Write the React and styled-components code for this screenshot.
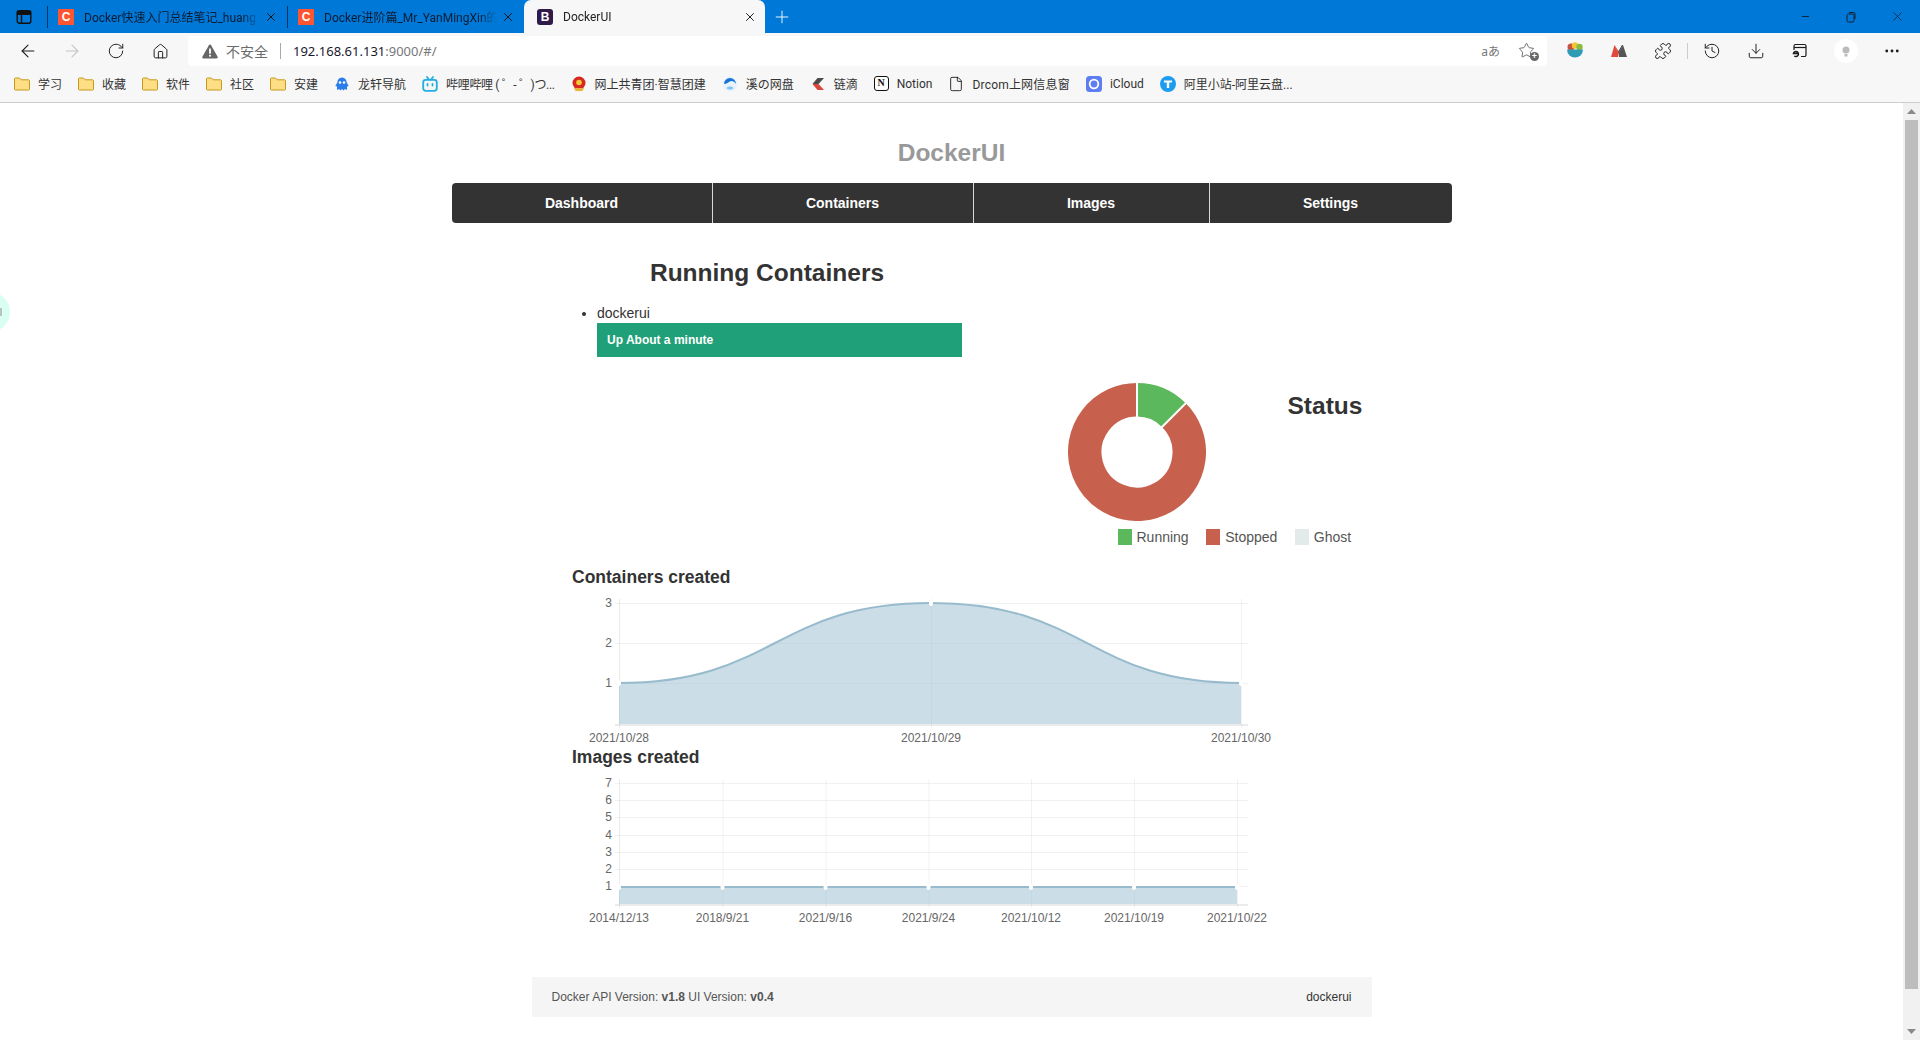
import React from "react";
import styled, { createGlobalStyle } from "styled-components";
import {
  ArrowLeft, ArrowRight, RotateCw, Home, X, Plus, Minus, Puzzle, History,
  Download, MoreHorizontal, Star, File,
} from "lucide-react";

const Global = createGlobalStyle`
  html, body { margin: 0; padding: 0; height: 100%; overflow: hidden; background: #fff; }
  body { font-family: "Liberation Sans", Arial, sans-serif; font-size: 14px; color: #333; }
  * { box-sizing: border-box; }
`;

const CHROME_FONT = `"Noto Sans", "Noto Sans CJK SC", sans-serif`;
const LABEL_FONT = `Roboto, "Noto Sans CJK SC", sans-serif`;

const Screen = styled.div`
  width: 1920px; height: 1040px; display: flex; flex-direction: column; overflow: hidden; position: relative;
`;

/* ---------- browser chrome ---------- */
const TabStrip = styled.div`
  height: 33px; background: #0078d7; display: flex; align-items: stretch; font-family: ${LABEL_FONT};
`;
const SideButton = styled.div`
  width: 47px; display: flex; align-items: center; justify-content: center; padding-left: 1px;
`;
const TabSep = styled.div`
  width: 1px; height: 22px; align-self: center; background: rgba(0,0,0,.55);
`;
const Tab = styled.div`
  width: ${p => p.$w}px; display: flex; align-items: center; padding: 0 ${p => p.$active ? 8 : 9}px 0 ${p => p.$active ? 13 : 10}px;
  background: ${p => p.$active ? "#f7f7f7" : "transparent"};
  border-radius: ${p => p.$active ? "7px 7px 0 0" : 0};
  color: ${p => p.$active ? "#222" : "#0c1c33"};
`;
const Favicon = styled.div`
  width: 16px; height: 16px; flex: none; display: flex; align-items: center; justify-content: center;
  background: ${p => p.$bg}; color: #fff; font: 700 12px "Liberation Sans", sans-serif;
  border-radius: ${p => p.$r || 0}px;
`;
const TabTitle = styled.div`
  flex: 1; min-width: 0; margin: 0 4px 0 10px; font-size: 12px; white-space: nowrap; overflow: hidden;
  -webkit-mask-image: linear-gradient(to right, #000 90%, transparent 100%);
  mask-image: linear-gradient(to right, #000 90%, transparent 100%);
`;
const PlusBox = styled.div`
  width: 20px; margin-left: 7px; display: flex; align-items: center; justify-content: center; color: #fff;
`;
const WindowControls = styled.div`
  margin-left: auto; display: flex; color: #14202e;
`;
const WinBtn = styled.div`
  width: 46px; display: flex; align-items: center; justify-content: center;
`;

const Toolbar = styled.div`
  height: 36px; background: #f7f7f7; display: flex; align-items: flex-start; padding: 3px 0 0 6px; font-family: ${CHROME_FONT};
`;
const ToolBtn = styled.div`
  width: 44px; height: 30px; flex: none; display: flex; align-items: center; justify-content: center;
  color: ${p => p.$muted ? "#c4c4c4" : "#1f1f1f"}; margin: ${p => p.$m || 0};
`;
const AddressBox = styled.div`
  width: 1359px; height: 30px; margin: 0 6px; background: #fff; border-radius: 4px; display: flex; align-items: center; padding: 0 11px 0 14px;
`;
const NotSecure = styled.span`
  margin-left: 8px; font-size: 14px; color: #6b6b6b;
`;
const AddrSep = styled.div`
  width: 1px; height: 16px; background: #a8a8a8; margin: 0 12px;
`;
const Url = styled.div`
  font-size: 13px; color: #777;
  & b { font-weight: 400; color: #1a1a2e; }
`;
const AddrRight = styled.div`
  margin-left: auto; display: flex; align-items: center; gap: 18px;
`;
const Translate = styled.span`
  font-size: 12px; color: #777;
`;
const StarWrap = styled.div`
  position: relative; width: 18px; height: 18px; color: #555;
`;
const StarPlus = styled.div`
  position: absolute; right: -3px; bottom: -1px; width: 9px; height: 9px; border-radius: 50%; background: #666;
  color: #fff; font: 700 9px/9px "Liberation Sans", sans-serif; text-align: center;
`;
const ToolSep = styled.div`
  width: 1px; height: 16px; margin: 7px 2px 0; background: #ccc; flex: none;
`;
const Avatar = styled.div`
  width: 24px; height: 24px; border-radius: 50%; background: #fff; display: flex; align-items: center; justify-content: center;
`;

const Bookmarks = styled.div`
  height: 34px; background: #f7f7f7; border-bottom: 1px solid #ccc; display: flex; align-items: center; gap: 16px;
  padding: 0 0 4px 14px; font-family: ${LABEL_FONT}; font-size: 12px; color: #333;
`;
const Bookmark = styled.div`
  display: flex; align-items: center; gap: 8px; white-space: nowrap;
  & > svg, & > div:first-child { flex: none; }
`;
const BookmarkLabel = styled.span`
  letter-spacing: ${p => p.$spacing || 0}px;
`;
const NotionMark = styled.div`
  width: 15px; height: 15px; border: 1.5px solid #111; border-radius: 3px; background: #fff;
  font: 700 10px/12px "Liberation Serif", serif; color: #111; text-align: center;
`;

/* ---------- page ---------- */
const PageArea = styled.div`
  flex: 1; min-height: 0; display: flex;
`;
const Page = styled.main`
  width: 1903px; display: flex; flex-direction: column; align-items: center; background: #fff;
`;
const Masthead = styled.h3`
  margin: 29px 0 9px; width: 1000px; text-align: center; font-size: 24.5px; line-height: 42px; font-weight: 700; color: #999;
`;
const NavBar = styled.nav`
  width: 1000px; height: 40px; background: #333; border-radius: 4px; display: grid;
  grid-template-columns: 261px 261px 236px 242px;
`;
const NavItem = styled.a`
  display: flex; align-items: center; justify-content: center; color: #fff; font-weight: 700; font-size: 14px;
  border-right: ${p => p.$last ? "none" : "1px solid #d8d8d8"};
`;
const Content = styled.div`
  width: 840px; padding: 0 40px; display: flex; flex-direction: column;
`;
const RunningBlock = styled.section`
  width: 390px; margin-left: 0.5px;
`;
const BigHeading = styled.h3`
  margin: ${p => p.$m}; font-size: 24.5px; line-height: 42px; font-weight: 700; color: #333; text-align: ${p => p.$center ? "center" : "left"};
`;
const ContainerList = styled.ul`
  margin: 0; padding: 0 0 0 25px; line-height: 20px; color: #333;
`;
const RunBar = styled.div`
  height: 34px; background: #1fa078; color: #fff; font-weight: 700; font-size: 12px; display: flex; align-items: center; padding-left: 10px;
`;
const StatusRow = styled.section`
  margin: 26px 0 0 496px; display: flex; align-items: flex-start;
`;
const Legend = styled.div`
  margin: 8px 0 0 546px; display: flex; gap: 17.5px; line-height: 16px; color: #555;
`;
const LegendItem = styled.div`
  display: flex; align-items: center; gap: 5px;
`;
const Swatch = styled.span`
  width: 14px; height: 16px; background: ${p => p.$c};
`;
const ChartHeading = styled.h4`
  margin: ${p => p.$m}; padding-left: 0.5px; font-size: 17.5px; line-height: 20px; font-weight: 700; color: #333;
`;
const ChartSvg = styled.svg`
  display: block; margin: 8px 0 0 1px; overflow: visible;
  & text { font: 12px "Liberation Sans", sans-serif; fill: #666; }
`;
const Footer = styled.footer`
  width: 840px; height: 40px; margin-top: 52px; background: #f5f5f5; display: flex; align-items: center; justify-content: space-between;
  padding: 0 20px; font-size: 12px; color: #555;
`;
const FooterRight = styled.span`
  color: #333;
`;
const Scrollbar = styled.aside`
  width: 17px; background: #f1f1f1; display: flex; flex-direction: column; align-items: center;
`;
const ScrollArrow = styled.div`
  height: 17px; flex: none; display: flex; align-items: center; justify-content: center; margin-top: ${p => p.$bottom ? "auto" : 0};
`;
const Thumb = styled.div`
  width: 13px; height: 869px; background: #bdbdbd;
`;
const EdgeBubble = styled.div`
  position: absolute; left: -30px; top: 292px; width: 40px; height: 40px; border-radius: 50%; background: #d8fff2;
  &::after { content: ""; position: absolute; left: 30px; top: 16px; width: 2px; height: 8px; background: #b9c4c0; }
`;

/* ---------- drawings ---------- */
const SidebarIcon = () => (
  <svg width="16" height="16" viewBox="0 0 16 16" fill="none" stroke="#111" strokeWidth="1.4">
    <rect x="1.2" y="1.7" width="13.6" height="12.6" rx="2.4" />
    <path d="M1.5 5h13M5.5 5v9" />
    <path d="M1.5 2.5h13v2.5h-13z" fill="#111" />
  </svg>
);
const RestoreIcon = () => (
  <svg width="10" height="12" viewBox="0 0 10 12" fill="none" stroke="#14202e">
    <rect x="1" y="3" width="7" height="8" rx="1.5" />
    <path d="M3 1.5h4.5a1.5 1.5 0 0 1 1.5 1.5v5" />
  </svg>
);
const WarnIcon = () => (
  <svg width="16" height="15" viewBox="0 0 16 15">
    <path d="M8 .6c.5 0 .9.3 1.100.6l6.500 11.500c.4.800-.1 1.700-1 1.700H1.400c-.9 0-1.400-.9-1-1.700L6.900 1.200C7.100.9 7.500.6 8 .6z" fill="#666" />
    <rect x="7.100" y="4.500" width="1.800" height="5.200" fill="#fff" />
    <rect x="7.100" y="10.800" width="1.800" height="1.800" fill="#fff" />
  </svg>
);
const FolderIcon = () => (
  <svg width="16" height="14" viewBox="0 0 16 14">
    <path d="M1.5 1h4l1.6 1.8h7.4a1 1 0 0 1 1 1V12a1 1 0 0 1-1 1h-13a1 1 0 0 1-1-1V2a1 1 0 0 1 1-1z" fill="#ffdf85" stroke="#c5981f" />
  </svg>
);
const GhostLogo = () => (
  <svg width="16" height="16" viewBox="0 0 16 16">
    <path d="M8 1.500c3 0 4.500 2.200 4.700 5l2 3.500-1.700.5v3.500l-2-1-1.500 1.500-1.500-1.500-1.500 1.500-1.500-1.500-2 1V10.500l-1.700-.5 2-3.500c.2-2.800 1.700-5 4.700-5z" fill="#2b7de9" />
    <circle cx="6" cy="6.500" r="1.300" fill="#fff" /><circle cx="10" cy="6.500" r="1.300" fill="#fff" />
  </svg>
);
const BiliLogo = () => (
  <svg width="16" height="16" viewBox="0 0 16 16" fill="none" stroke="#23ade5" strokeWidth="1.800" strokeLinecap="round">
    <rect x="1.200" y="3.800" width="13.600" height="11" rx="2.500" />
    <path d="M5 1l2 2.500M11 1L9 3.500M5.500 8v1.500M10.500 8v1.500" />
  </svg>
);
const EmblemLogo = () => (
  <svg width="16" height="16" viewBox="0 0 16 16">
    <circle cx="8" cy="7" r="6.500" fill="#d8281e" />
    <circle cx="8" cy="6.500" r="2.800" fill="#f4c63a" />
    <path d="M3 12h10l-1.500 3h-7z" fill="#e9b23a" />
  </svg>
);
const SwirlLogo = () => (
  <svg width="16" height="16" viewBox="0 0 16 16">
    <circle cx="8" cy="8" r="7.500" fill="#e9f2fb" />
    <path d="M2 8a6 6 0 0 1 12 0c-2-3-4-3.500-6-2.500S4 8 2 8z" fill="#1573d8" />
    <path d="M4.500 12c1.500-2 5.500-2 7 0-1.500 2-5.500 2-7 0z" fill="#7fc4f2" />
  </svg>
);
const LiandiLogo = () => (
  <svg width="16" height="16" viewBox="0 0 16 16">
    <path d="M14 2H7.500L2.500 8h6z" fill="#4a4a4a" />
    <path d="M2.500 8h6l5.500 6H7.500z" fill="#d9453a" />
  </svg>
);
const CloudLogo = () => (
  <svg width="16" height="16" viewBox="0 0 16 16" fill="none">
    <rect width="16" height="16" rx="3.500" fill="#5f7df2" />
    <circle cx="8" cy="8" r="4.300" stroke="#fff" strokeWidth="1.800" />
  </svg>
);
const AliLogo = () => (
  <svg width="16" height="16" viewBox="0 0 16 16">
    <circle cx="8" cy="8" r="8" fill="#1d9bf0" />
    <path d="M4 4.500h8v2H9.200V12H6.800V6.500H4z" fill="#fff" />
  </svg>
);
const BowlLogo = () => (
  <svg width="18" height="18" viewBox="0 0 18 18">
    <circle cx="5" cy="5" r="3.500" fill="#c8503f" />
    <circle cx="9" cy="3.500" r="3.200" fill="#f3c634" />
    <circle cx="13.500" cy="5" r="3.200" fill="#8dbb3f" />
    <path d="M1 7.500h16a8 8 0 0 1-16 0z" fill="#2e9bb5" />
  </svg>
);
const MLogo = () => (
  <svg width="16" height="14" viewBox="0 0 16 14">
    <path d="M0 13L3.500 1 7 8v5z" fill="#e04a3c" />
    <path d="M8 13V8l4-7 4 12z" fill="#555" />
    <path d="M3.500 1L8 8v5l-1-5z" fill="#c9352a" />
    <path d="M12 1L8 8l-1 0 4-7z" fill="#333" />
  </svg>
);
const ExplorerIcon = () => (
  <svg width="16" height="16" viewBox="0 0 16 16" fill="none" stroke="#1a1a1a" strokeWidth="1.200">
    <path d="M2 7V3a1.500 1.500 0 0 1 1.500-1.500h9A1.500 1.500 0 0 1 14 3v9a1.500 1.500 0 0 1-1.500 1.500H9" />
    <path d="M2 4.500h12" />
    <path d="M6.500 10.500H1.500a2.500 2.500 0 1 1 .8 2.500 M1.500 10.500a2.500 2.500 0 0 1 4.800-.5" strokeWidth="1.500" />
  </svg>
);
const BulbIcon = () => (
  <svg width="10" height="11" viewBox="0 0 10 11" fill="#bbb">
    <circle cx="5" cy="4" r="3.500" /><rect x="3.500" y="8" width="3" height="2.500" />
  </svg>
);

const gridStroke = "rgba(0,0,0,.05)";
const axisStroke = "rgba(0,0,0,.08)";

const PointGap = ({ x, y }) => <ellipse cx={x} cy={y} rx="2" ry="3" fill="#fff" />;

const ContainersChart = () => {
  const ys = [[603, "3"], [643, "2"], [683, "1"]];
  const line = "M618 683C774 683 774 603 930 603C1086 603 1086 683 1240 683";
  return (
    <ChartSvg width="708" height="150" viewBox="572 595 708 150">
      {ys.map(([y]) => <line key={y} x1="614" x2="1247" y1={y + .5} y2={y + .5} stroke={gridStroke} />)}
      {[930, 1240].map(x => <line key={x} x1={x + .5} x2={x + .5} y1="599" y2="728" stroke={gridStroke} />)}
      <line x1="618.500" x2="618.500" y1="599" y2="728" stroke={axisStroke} />
      <line x1="614" x2="1247" y1="725" y2="725" stroke={axisStroke} strokeWidth="2" />
      <path d={line + "V724H618Z"} fill="rgba(151,187,205,.5)" />
      <path d={line} fill="none" stroke="#97bbcd" strokeWidth="2" />
      <PointGap x={618} y={683} /><PointGap x={930} y={603} /><PointGap x={1240} y={683} />
      {ys.map(([y, t]) => <text key={t} x="611" y={y + 4} textAnchor="end">{t}</text>)}
      <text x="618" y="742" textAnchor="middle">2021/10/28</text>
      <text x="930" y="742" textAnchor="middle">2021/10/29</text>
      <text x="1240" y="742" textAnchor="middle">2021/10/30</text>
    </ChartSvg>
  );
};

const ImagesChart = () => {
  const xs = [[618, "2014/12/13"], [721.5, "2018/9/21"], [824.5, "2021/9/16"], [927.5, "2021/9/24"], [1030, "2021/10/12"], [1133, "2021/10/19"], [1236, "2021/10/22"]];
  const ys = [7, 6, 5, 4, 3, 2, 1].map((v, i) => [Math.round(783 + i * 17.2), v]);
  return (
    <ChartSvg width="708" height="150" viewBox="572 775 708 150">
      {ys.map(([y]) => <line key={y} x1="614" x2="1247" y1={y + .5} y2={y + .5} stroke={gridStroke} />)}
      {xs.slice(1).map(([x]) => <line key={x} x1={x + .5} x2={x + .5} y1="779" y2="908" stroke={gridStroke} />)}
      <line x1="618.500" x2="618.500" y1="779" y2="908" stroke={axisStroke} />
      <line x1="614" x2="1247" y1="905" y2="905" stroke={axisStroke} strokeWidth="2" />
      <rect x="618" y="887" width="618" height="17" fill="rgba(151,187,205,.5)" />
      <line x1="618" x2="1236" y1="887" y2="887" stroke="#97bbcd" strokeWidth="2" />
      {xs.map(([x]) => <PointGap key={x} x={x} y={887} />)}
      {ys.map(([y, t]) => <text key={t} x="611" y={y + 4} textAnchor="end">{t}</text>)}
      {xs.map(([x, t]) => <text key={t} x={x} y="922" textAnchor="middle">{t}</text>)}
    </ChartSvg>
  );
};

const Donut = () => {
  const r = 52.25, c = 69;
  const end = c + r * Math.SQRT1_2;
  const endY = c - r * Math.SQRT1_2;
  return (
    <svg width="138" height="138" viewBox="0 0 138 138" style={{ flex: "none" }}>
      <path d={`M${c} ${c - r}A${r} ${r} 0 1 0 ${end} ${endY}`} fill="none" stroke="#c7614d" strokeWidth="33.500" />
      <path d={`M${c} ${c - r}A${r} ${r} 0 0 1 ${end} ${endY}`} fill="none" stroke="#5cb85c" strokeWidth="33.500" />
      <line x1={c} y1={c - 34} x2={c} y2="0" stroke="#fff" strokeWidth="2" />
      <line x1={c + 24.500} y1={c - 24.500} x2={c + 49} y2={c - 49} stroke="#fff" strokeWidth="2" />
    </svg>
  );
};

const NAV = [["Dashboard"], ["Containers"], ["Images"], ["Settings", true]];

const BOOKMARKS = [
  [<FolderIcon />, "学习"], [<FolderIcon />, "收藏"], [<FolderIcon />, "软件"], [<FolderIcon />, "社区"], [<FolderIcon />, "安建"],
  [<GhostLogo />, "龙轩导航"], [<BiliLogo />, "哔哩哔哩 ( ゜- ゜)つ...", -0.35], [<EmblemLogo />, "网上共青团·智慧团建"], [<SwirlLogo />, "溪の网盘"],
  [<LiandiLogo />, "链滴"], [<NotionMark>N</NotionMark>, "Notion"], [<File size={16} strokeWidth={1.300} color="#111" />, "Drcom上网信息窗", 0.2],
  [<CloudLogo />, "iCloud"], [<AliLogo />, "阿里小站-阿里云盘..."],
];

export default function App() {
  return (
    <Screen>
      <Global />
      <TabStrip>
        <SideButton><SidebarIcon /></SideButton>
        <TabSep />
        <Tab $w={239}>
          <Favicon $bg="#fc5531">C</Favicon>
          <TabTitle>Docker快速入门总结笔记_huang</TabTitle>
          <X size={14} strokeWidth={1.600} color="#111" />
        </Tab>
        <TabSep />
        <Tab $w={236}>
          <Favicon $bg="#fc5531">C</Favicon>
          <TabTitle>Docker进阶篇_Mr_YanMingXin的</TabTitle>
          <X size={14} strokeWidth={1.600} color="#111" />
        </Tab>
        <Tab $active $w={241}>
          <Favicon $bg="#2f1a4a" $r={3}>B</Favicon>
          <TabTitle>DockerUI</TabTitle>
          <X size={14} strokeWidth={1.600} color="#111" />
        </Tab>
        <PlusBox><Plus size={22} strokeWidth={1.100} /></PlusBox>
        <WindowControls>
          <WinBtn><Minus size={11} strokeWidth={2} /></WinBtn>
          <WinBtn><RestoreIcon /></WinBtn>
          <WinBtn><X size={15} strokeWidth={1.200} /></WinBtn>
        </WindowControls>
      </TabStrip>

      <Toolbar>
        <ToolBtn><ArrowLeft size={20} strokeWidth={1.300} /></ToolBtn>
        <ToolBtn $muted><ArrowRight size={20} strokeWidth={1.300} /></ToolBtn>
        <ToolBtn><RotateCw size={18} strokeWidth={1.300} /></ToolBtn>
        <ToolBtn><Home size={17} strokeWidth={1.400} /></ToolBtn>
        <AddressBox>
          <WarnIcon />
          <NotSecure>不安全</NotSecure>
          <AddrSep />
          <Url><b>192.168.61.131</b>:9000/#/</Url>
          <AddrRight>
            <Translate>aあ</Translate>
            <StarWrap><Star size={17} strokeWidth={1.200} /><StarPlus>+</StarPlus></StarWrap>
          </AddrRight>
        </AddressBox>
        <ToolBtn><BowlLogo /></ToolBtn>
        <ToolBtn><MLogo /></ToolBtn>
        <ToolBtn><Puzzle size={18} strokeWidth={1.300} /></ToolBtn>
        <ToolSep />
        <ToolBtn><History size={18} strokeWidth={1.300} /></ToolBtn>
        <ToolBtn><Download size={18} strokeWidth={1.300} /></ToolBtn>
        <ToolBtn><ExplorerIcon /></ToolBtn>
        <ToolBtn $m="0 2px"><Avatar><BulbIcon /></Avatar></ToolBtn>
        <ToolBtn><MoreHorizontal size={18} strokeWidth={1.800} /></ToolBtn>
      </Toolbar>

      <Bookmarks>
        {BOOKMARKS.map(([icon, label, spacing]) => (
          <Bookmark key={label}>{icon}<BookmarkLabel $spacing={spacing}>{label}</BookmarkLabel></Bookmark>
        ))}
      </Bookmarks>

      <PageArea>
        <Page>
          <Masthead>DockerUI</Masthead>
          <NavBar>
            {NAV.map(([label, last]) => <NavItem key={label} $last={last}>{label}</NavItem>)}
          </NavBar>
          <Content>
            <RunningBlock>
              <BigHeading $m="29px 0 9px" $center>Running Containers</BigHeading>
              <ContainerList>
                <li>dockerui<RunBar>Up About a minute</RunBar></li>
              </ContainerList>
            </RunningBlock>
            <StatusRow>
              <Donut />
              <BigHeading $m="2px 0 0 82px">Status</BigHeading>
            </StatusRow>
            <Legend>
              <LegendItem><Swatch $c="#5cb85c" />Running</LegendItem>
              <LegendItem><Swatch $c="#c7614d" />Stopped</LegendItem>
              <LegendItem><Swatch $c="#e2eaea" />Ghost</LegendItem>
            </Legend>
            <ChartHeading $m="22px 0 0">Containers created</ChartHeading>
            <ContainersChart />
            <ChartHeading $m="2px 0 0">Images created</ChartHeading>
            <ImagesChart />
          </Content>
          <Footer>
            <span>Docker API Version: <strong>v1.8</strong> UI Version: <strong>v0.4</strong></span>
            <FooterRight>dockerui</FooterRight>
          </Footer>
        </Page>
        <Scrollbar>
          <ScrollArrow><svg width="9" height="5" viewBox="0 0 9 5"><path d="M4.500 0L9 5H0z" fill="#8a8a8a" /></svg></ScrollArrow>
          <Thumb />
          <ScrollArrow $bottom><svg width="9" height="5" viewBox="0 0 9 5"><path d="M0 0h9L4.500 5z" fill="#8a8a8a" /></svg></ScrollArrow>
        </Scrollbar>
      </PageArea>
      <EdgeBubble />
    </Screen>
  );
}
